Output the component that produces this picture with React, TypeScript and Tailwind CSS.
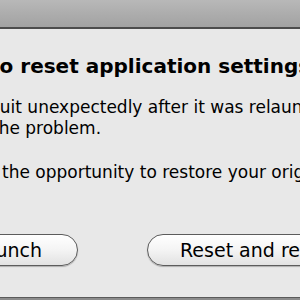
const font = { fontFamily: '"DejaVu Sans", "Lucida Grande", sans-serif' }

function PillButton({ label, className }: { label: string; className: string }) {
  return (
    <div
      className={`flex h-[32px] shrink-0 items-center rounded-full border border-[#5c5c5c] bg-gradient-to-b from-[#ffffff] via-[#f4f4f4] to-[#e2e2e2] text-[19px] text-black shadow-[0_1px_1px_rgba(0,0,0,0.25)] whitespace-nowrap ${className}`}
    >
      {label}
    </div>
  )
}

export default function App() {
  return (
    <div className="flex h-[300px] w-[300px] flex-col overflow-hidden bg-[#e8e8e8]" style={font}>
      <div className="h-[27px] shrink-0 bg-gradient-to-b from-[#b8b8b8] to-[#a2a2a2]" />
      <div className="h-[2px] shrink-0 bg-[#4c4c4c]" />
      <div className="flex flex-1 flex-col overflow-hidden">
        <div className="mt-[25px] ml-[-10px] whitespace-nowrap text-[20px] font-bold leading-[24px] text-black">
          to reset application settings?
        </div>
        <div className="mt-[19px] flex flex-col text-[17px] leading-[21px] text-black">
          <div className="ml-[-11px] whitespace-nowrap">quit unexpectedly after it was relaunched</div>
          <div className="ml-[-8px] whitespace-nowrap">the problem.</div>
          <div className="mt-[23px] ml-[2px] whitespace-nowrap">the opportunity to restore your original</div>
        </div>
        <div className="mt-auto mb-[31px] flex items-center">
          <PillButton label="Relaunch" className="ml-[-60px] w-[138px] justify-end pr-[35px]" />
          <PillButton label="Reset and relaunch" className="ml-[69px] w-[220px] pl-[32px]" />
        </div>
      </div>
      <div className="h-[1px] shrink-0 bg-[#5a5a5a]" />
      <div className="h-[2px] shrink-0 bg-[#8c8c8c]" />
    </div>
  )
}
